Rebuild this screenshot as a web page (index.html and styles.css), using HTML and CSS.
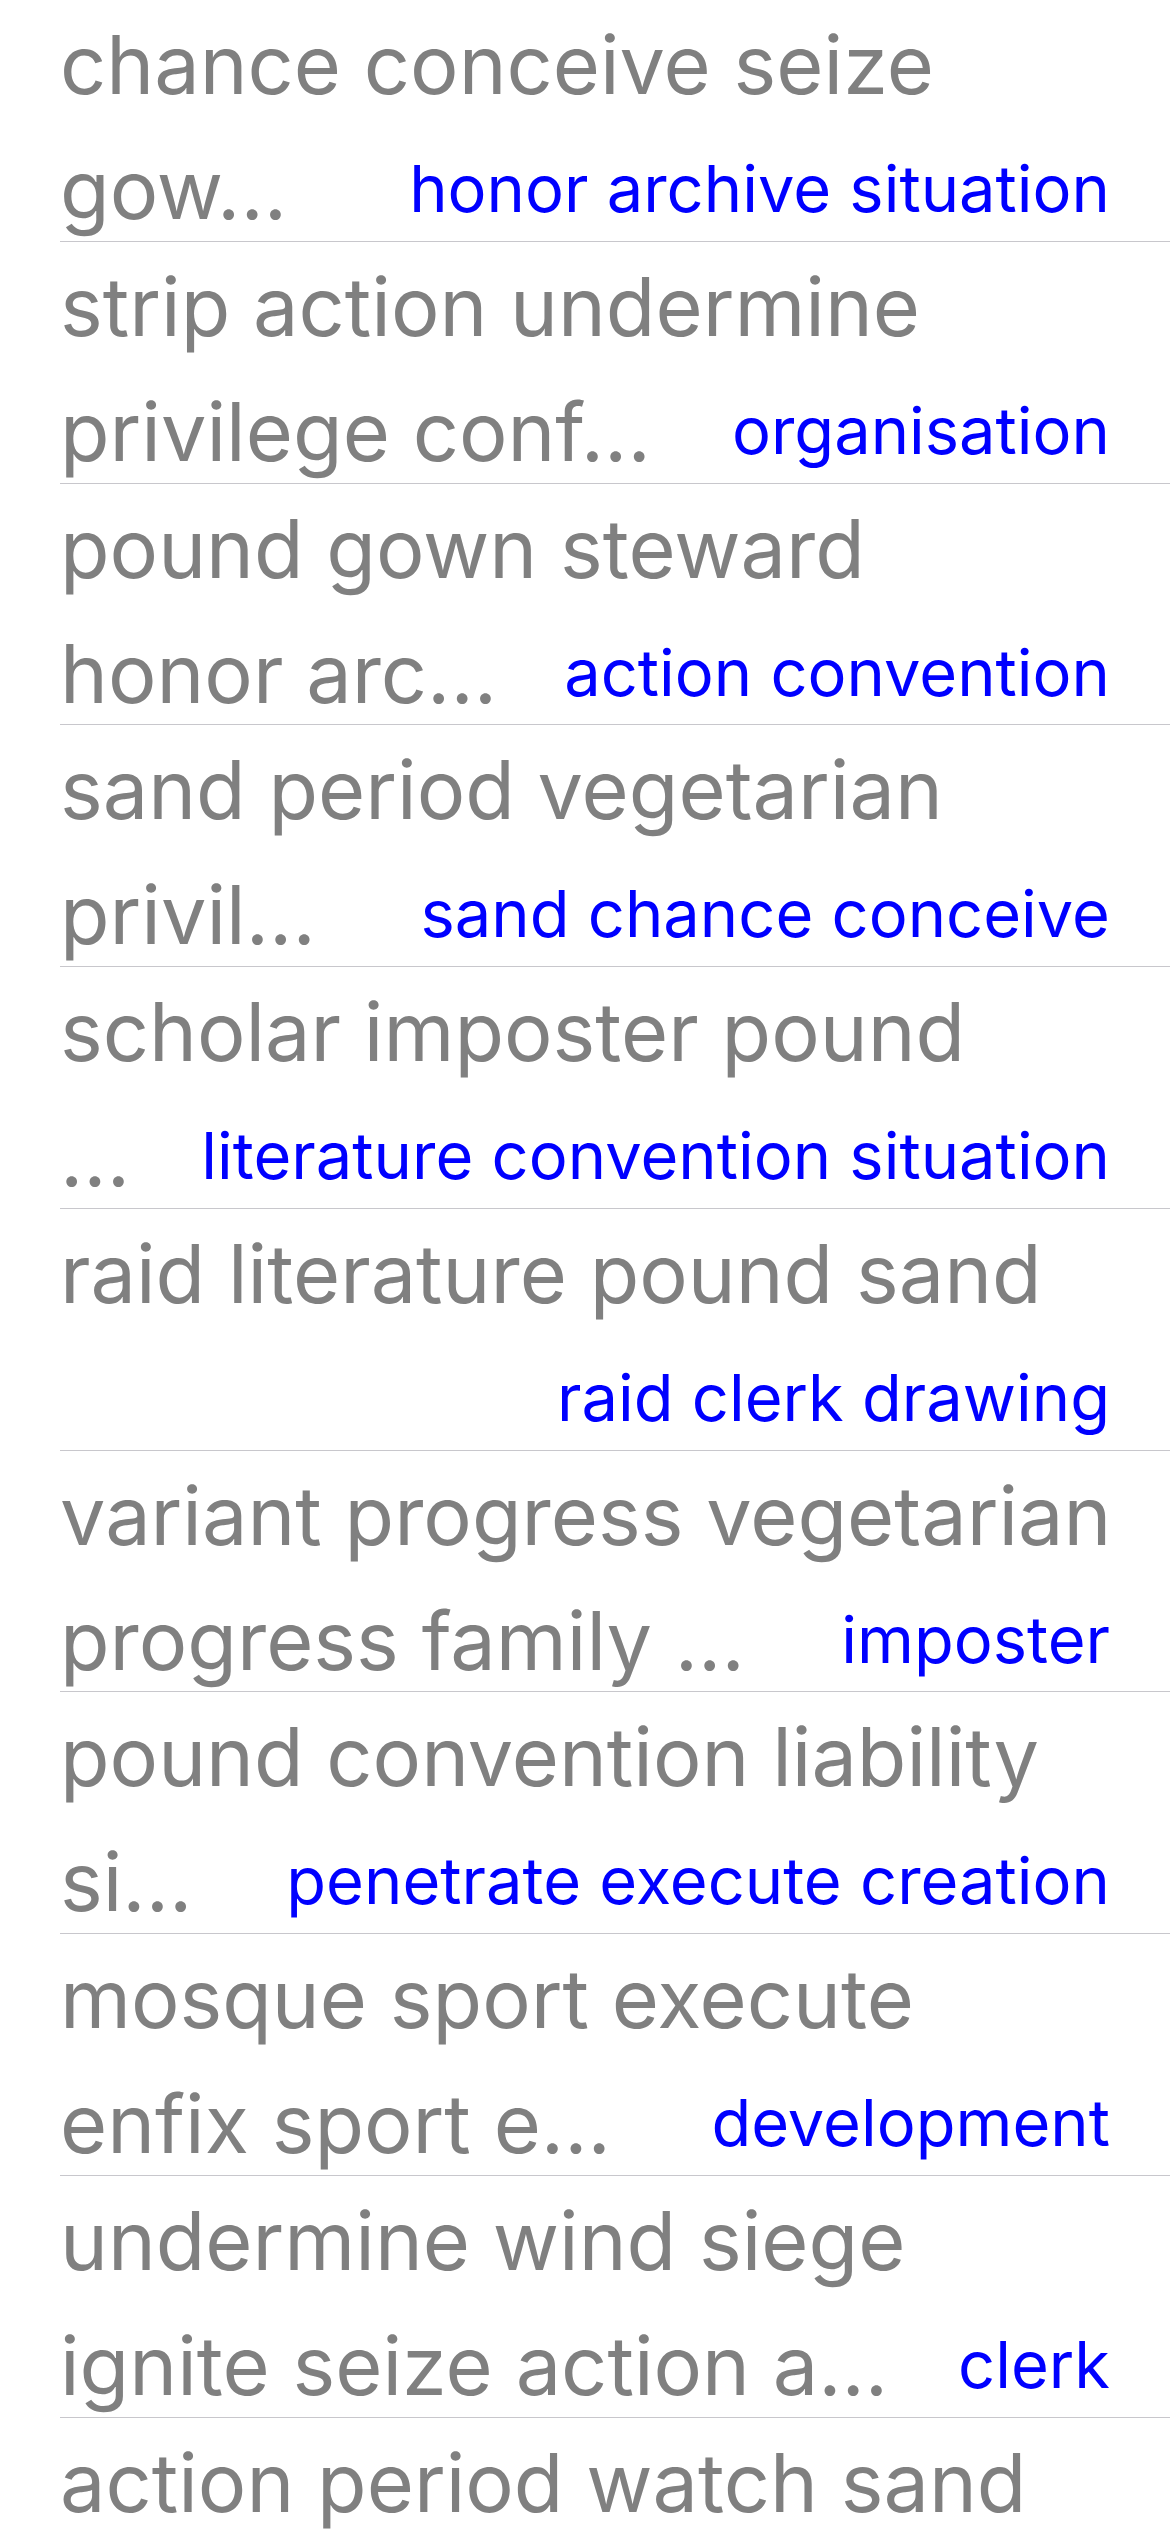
FILE: index.html
```html
<!DOCTYPE html>
<html lang="en">
<head>
<meta charset="utf-8">
<title>List</title>
<link rel="stylesheet" href="styles.css">
</head>
<body>
<ul class="list">
  <li class="row">
    <div class="title">chance conceive seize</div>
    <div class="line2"><span class="rest">gow...</span><span class="tag"><span class="tag-text">honor archive situation</span></span></div>
  </li>
  <li class="row">
    <div class="title">strip action undermine</div>
    <div class="line2"><span class="rest">privilege conf...</span><span class="tag"><span class="tag-text">organisation</span></span></div>
  </li>
  <li class="row">
    <div class="title">pound gown steward</div>
    <div class="line2"><span class="rest">honor arc...</span><span class="tag"><span class="tag-text">action convention</span></span></div>
  </li>
  <li class="row">
    <div class="title">sand period vegetarian</div>
    <div class="line2"><span class="rest">privil...</span><span class="tag"><span class="tag-text">sand chance conceive</span></span></div>
  </li>
  <li class="row">
    <div class="title">scholar imposter pound</div>
    <div class="line2"><span class="rest">...</span><span class="tag"><span class="tag-text">literature convention situation</span></span></div>
  </li>
  <li class="row">
    <div class="title">raid literature pound sand</div>
    <div class="line2"><span class="rest">&nbsp;</span><span class="tag"><span class="tag-text">raid clerk drawing</span></span></div>
  </li>
  <li class="row">
    <div class="title">variant progress vegetarian</div>
    <div class="line2"><span class="rest">progress family ...</span><span class="tag"><span class="tag-text">imposter</span></span></div>
  </li>
  <li class="row">
    <div class="title">pound convention liability</div>
    <div class="line2"><span class="rest">si...</span><span class="tag"><span class="tag-text">penetrate execute creation</span></span></div>
  </li>
  <li class="row">
    <div class="title">mosque sport execute</div>
    <div class="line2"><span class="rest">enfix sport e...</span><span class="tag"><span class="tag-text">development</span></span></div>
  </li>
  <li class="row">
    <div class="title">undermine wind siege</div>
    <div class="line2"><span class="rest">ignite seize action a...</span><span class="tag"><span class="tag-text">clerk</span></span></div>
  </li>
  <li class="row">
    <div class="title">action period watch sand</div>
    <div class="line2"><span class="rest">&nbsp;</span><span class="tag"><span class="tag-text"></span></span></div>
  </li>
</ul>
</body>
</html>
```
FILE: styles.css
```css
html, body {
  margin: 0;
  padding: 0;
  background: #ffffff;
}

body {
  font-family: Inter, "Liberation Sans", Arial, sans-serif;
}

.list {
  list-style: none;
  margin: 0;
  padding: 0 0 0 60px;
}

.row {
  height: 241.75px;
  box-sizing: border-box;
  border-bottom: 1px solid #c8c7cc;
  padding: 4px 60px 0 0;
}

.title,
.line2 {
  font-size: 81px;
  line-height: 123px;
  color: #808080;
  white-space: nowrap;
}

.line2 {
  display: flex;
  align-items: baseline;
  justify-content: space-between;
}

.rest {
  overflow: hidden;
}

.tag {
  font-size: 65px;
  color: #0000ff;
}

.tag-text {
  vertical-align: 7px;
}
```
